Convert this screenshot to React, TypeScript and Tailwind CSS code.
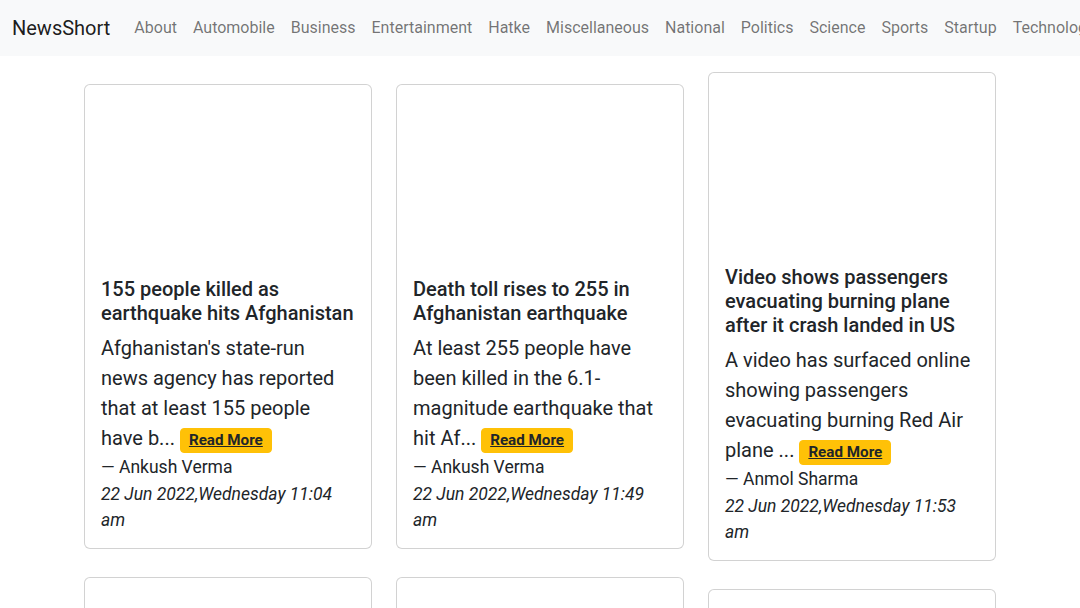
const categories = [
  "About",
  "Automobile",
  "Business",
  "Entertainment",
  "Hatke",
  "Miscellaneous",
  "National",
  "Politics",
  "Science",
  "Sports",
  "Startup",
  "Technology",
  "World",
];

type News = {
  title: string;
  text: string;
  author: string;
  date: string;
};

const news: News[] = [
  {
    title: "155 people killed as earthquake hits Afghanistan",
    text: "Afghanistan's state-run news agency has reported that at least 155 people have b...",
    author: "Ankush Verma",
    date: "22 Jun 2022,Wednesday 11:04 am",
  },
  {
    title: "Death toll rises to 255 in Afghanistan earthquake",
    text: "At least 255 people have been killed in the 6.1-magnitude earthquake that hit Af...",
    author: "Ankush Verma",
    date: "22 Jun 2022,Wednesday 11:49 am",
  },
  {
    title: "Video shows passengers evacuating burning plane after it crash landed in US",
    text: "A video has surfaced online showing passengers evacuating burning Red Air plane ...",
    author: "Anmol Sharma",
    date: "22 Jun 2022,Wednesday 11:53 am",
  },
  {
    title: "Sensex falls over 700 points as global markets tumble amid rate hike fears",
    text: "The BSE Sensex fell over 700 points on Wednesday, tracking weakness in global mar...",
    author: "Pragya Swastik",
    date: "22 Jun 2022,Wednesday 12:10 pm",
  },
  {
    title: "Shinde says he will not quit Shiv Sena, calls himself a true Shiv Sainik",
    text: "Maharashtra minister Eknath Shinde, who is camping in Guwahati with rebel MLAs, s...",
    author: "Apaar Sharma",
    date: "22 Jun 2022,Wednesday 12:24 pm",
  },
  {
    title: "India to host Quad summit meeting next year",
    text: "India will host the next in-person meeting of Quad leaders in 2023, the Ministry o...",
    author: "Hiral Goyal",
    date: "22 Jun 2022,Wednesday 12:31 pm",
  },
];

function NewsCard({ item }: { item: News }) {
  return (
    <div className="mt-4 w-[288px] rounded-[6px] border border-[rgba(0,0,0,0.175)] bg-white">
      {/* image did not load, keeps its box */}
      <div className="h-[176px]" />
      <div className="px-4 pt-4 pb-[15px]">
        <h5 className="mb-2 text-[20px] leading-[24px] font-medium text-[#212529]">
          {item.title}
        </h5>
        <p className="text-[20px] leading-[30px] text-[#212529]">
          {item.text}{" "}
          <a
            href="#"
            className="inline-block rounded-[4px] border border-[#ffc107] bg-[#ffc107] px-2 text-[15.2px] leading-[23px] font-bold text-[#212529] underline"
          >
            Read More
          </a>
        </p>
        <p className="mt-px text-[17.5px] leading-[26px] text-[#212529]">— {item.author}</p>
        <p className="mt-px text-[17.5px] leading-[26px] text-[#212529] italic">{item.date}</p>
      </div>
    </div>
  );
}

export default function App() {
  return (
    <div className="min-h-screen overflow-hidden bg-white font-['Roboto',sans-serif] text-[#212529]">
      {/* Navbar */}
      <nav className="flex h-14 items-center overflow-hidden bg-[#f8f9fa] px-3 whitespace-nowrap">
        <a href="#" className="mr-4 text-[20px] leading-[30px] text-[rgba(0,0,0,0.9)]">
          NewsShort
        </a>
        <ul className="flex">
          {categories.map((c) => (
            <li key={c}>
              <a href="#" className="block px-2 py-2 text-[16px] leading-[24px] text-[rgba(0,0,0,0.55)]">
                {c}
              </a>
            </li>
          ))}
        </ul>
      </nav>

      {/* Cards */}
      <div className="mx-auto w-[960px] px-3">
        <div className="grid grid-cols-3 items-center">
          {news.map((item) => (
            <div key={item.title} className="flex justify-start px-3">
              <NewsCard item={item} />
            </div>
          ))}
        </div>
      </div>
    </div>
  );
}
